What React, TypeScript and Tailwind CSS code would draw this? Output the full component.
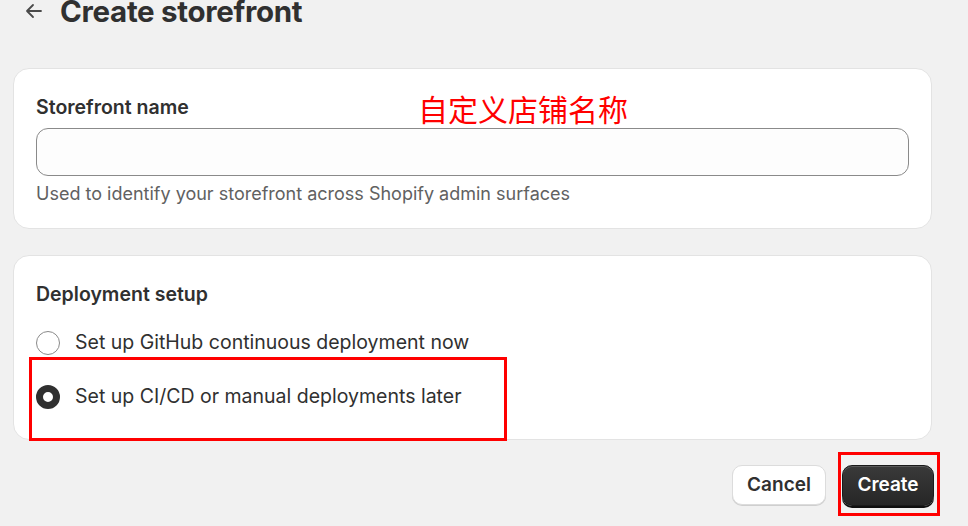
import React from "react";

const Radio: React.FC<{ checked?: boolean; label: string }> = ({ checked, label }) => (
  <label className="flex items-center gap-[15px] h-[34px]">
    {checked ? (
      <span className="w-[24px] h-[24px] rounded-full border-[7px] border-[#303030] bg-white" />
    ) : (
      <span className="w-[24px] h-[24px] rounded-full border border-[#8a8a8a] bg-white" />
    )}
    <span className="text-[19.5px] text-[#303030]">{label}</span>
  </label>
);

const App: React.FC = () => {
  return (
    <div className="relative w-[968px] h-[526px] overflow-hidden bg-[#f1f1f1] font-['Inter',sans-serif] text-[#303030]">
      <div className="flex items-center h-[28px] -mt-[3px]">
        <svg className="ml-[24px] w-[20px] h-[20px]" viewBox="0 0 20 20" fill="none" stroke="#4a4a4a" strokeWidth="1.8" strokeLinecap="round" strokeLinejoin="round">
          <path d="M17 10H3M9 4l-6 6 6 6" />
        </svg>
        <h1 className="ml-[16px] text-[29.5px] leading-[28px] font-bold tracking-[-0.3px]">Create storefront</h1>
      </div>

      <div className="ml-[13px] w-[919px] mt-[43px] flex flex-col gap-[26px]">
        <div className="relative h-[161px] bg-white rounded-[16px] border border-[#e3e3e3] px-[22px] pt-[24px]">
          <div className="text-[19.5px] font-semibold leading-[28px]">Storefront name</div>
          <div className="absolute left-[404px] top-[22px] text-[30px] leading-[34px] text-[#ff0000] font-['Noto_Sans_CJK_SC',sans-serif]">
            自定义店铺名称
          </div>
          <div className="mt-[7px] h-[48px] rounded-[12px] border border-[#8a8a8a] bg-[#fdfdfd]" />
          <div className="mt-[5px] text-[18px] leading-[26px] text-[#616161]">
            Used to identify your storefront across Shopify admin surfaces
          </div>
        </div>

        <div className="relative h-[185px] bg-white rounded-[16px] border border-[#e3e3e3] px-[22px] pt-[24px]">
          <div className="text-[19.5px] font-semibold leading-[28px]">Deployment setup</div>
          <div className="mt-[18px] flex flex-col gap-[20px]">
            <Radio label="Set up GitHub continuous deployment now" />
            <Radio checked label="Set up CI/CD or manual deployments later" />
          </div>
          <div className="absolute left-[15px] top-[101px] w-[478px] h-[84px] border-[3px] border-[#ff0000]" />
        </div>
      </div>

      <div className="flex justify-end gap-[16px] mr-[34px] mt-[25px]">
        <button className="h-[40px] w-[94px] rounded-[10px] bg-white border border-[#dcdcdc] shadow-[0_1px_0_#cfcfcf] text-[19px] font-semibold text-[#303030]">
          Cancel
        </button>
        <button className="h-[41px] w-[92px] rounded-[10px] bg-gradient-to-b from-[#3a3a3a] to-[#262626] border border-[#1a1a1a] shadow-[inset_0_1px_0_#5a5a5a,0_2px_0_#0f0f0f] text-[19px] font-semibold text-white">
          Create
        </button>
      </div>
      <div className="absolute left-[838px] top-[452px] w-[102px] h-[64px] border-[3px] border-[#ff0000]" />
    </div>
  );
};

export default App;
